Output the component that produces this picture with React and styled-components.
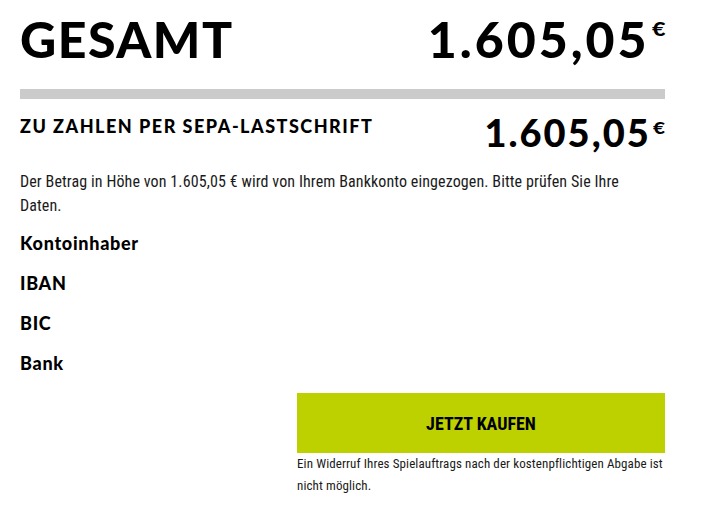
import React from "react";
import styled, { createGlobalStyle } from "styled-components";

const GlobalStyle = createGlobalStyle`
  html, body {
    margin: 0;
    padding: 0;
    background: #fff;
  }
  body {
    font-family: Lato, "Liberation Sans", sans-serif;
    color: #000;
  }
`;

const HEAD = `Lato, "Liberation Sans", sans-serif`;
const COND = `"Liberation Sans Narrow", "Roboto Condensed", "Liberation Sans", sans-serif`;

const Page = styled.div`
  width: 645px;
  padding: 14px 40px 0 20px;
`;

const Row = styled.div`
  display: flex;
  justify-content: space-between;
  align-items: flex-start;
  margin-top: ${(p) => p.$top || 0}px;
`;

const Title = styled.h1`
  margin: 0;
  font-family: ${HEAD};
  font-weight: 900;
  font-size: 50px;
  line-height: 50px;
  letter-spacing: 1.5px;
`;

const SubTitle = styled.h2`
  margin: 4px 0 0;
  font-family: ${HEAD};
  font-weight: 900;
  font-size: 18px;
  line-height: 18px;
  letter-spacing: 1.5px;
`;

const Amount = styled.div`
  display: flex;
  align-items: flex-start;
  font-family: ${HEAD};
  font-weight: 900;
  font-size: ${(p) => p.$size}px;
  line-height: ${(p) => p.$size}px;
  letter-spacing: ${(p) => p.$spacing || 0}px;
`;

const Euro = styled.span`
  display: inline-block;
  font-size: ${(p) => p.$size}px;
  line-height: ${(p) => p.$size}px;
  margin-top: ${(p) => p.$offset}px;
  margin-left: 2px;
  margin-right: 3px;
  letter-spacing: 0;
  transform: scaleX(1.3);
  transform-origin: left top;
`;

const Divider = styled.div`
  height: 10px;
  background: #cbcbcb;
  margin-top: 25px;
`;

const Info = styled.p`
  margin: 19px 0 0;
  max-width: 620px;
  font-family: ${COND};
  font-size: 16px;
  line-height: 24px;
  letter-spacing: 0.1px;
  color: #1a1a1a;
`;

const Fields = styled.div`
  margin-top: 5px;
  display: flex;
  flex-direction: column;
`;

const Field = styled.div`
  font-family: ${HEAD};
  font-weight: 900;
  font-size: 18px;
  line-height: 40px;
  letter-spacing: 0.7px;
`;

const Actions = styled.div`
  display: flex;
  justify-content: flex-end;
  margin-top: 10px;
`;

const ActionCol = styled.div`
  width: 368px;
`;

const BuyButton = styled.button`
  display: block;
  width: 100%;
  height: 60px;
  border: 0;
  padding: 0;
  background: #bdd000;
  color: #000;
  font-family: ${COND};
  font-weight: 700;
  font-size: 18px;
  cursor: pointer;
`;

const Note = styled.p`
  margin: 0;
  font-family: ${COND};
  font-size: 13px;
  line-height: 22px;
  letter-spacing: 0.1px;
  color: #1a1a1a;
`;

const Price = ({ value, size, euroSize, euroOffset, spacing }) => (
  <Amount $size={size} $spacing={spacing}>
    <span>{value}</span>
    <Euro $size={euroSize} $offset={euroOffset}>€</Euro>
  </Amount>
);

export default function App() {
  return (
    <>
      <GlobalStyle />
      <Page>
        <Row>
          <Title>GESAMT</Title>
          <Price value="1.605,05" size={50} euroSize={18} euroOffset={6} spacing={3} />
        </Row>
        <Divider />
        <Row $top={14}>
          <SubTitle>ZU ZAHLEN PER SEPA-LASTSCHRIFT</SubTitle>
          <Price value="1.605,05" size={38} euroSize={16} euroOffset={7} spacing={2} />
        </Row>
        <Info>
          Der Betrag in Höhe von 1.605,05 € wird von Ihrem Bankkonto eingezogen. Bitte prüfen Sie Ihre Daten.
        </Info>
        <Fields>
          <Field>Kontoinhaber</Field>
          <Field>IBAN</Field>
          <Field>BIC</Field>
          <Field>Bank</Field>
        </Fields>
        <Actions>
          <ActionCol>
            <BuyButton>JETZT KAUFEN</BuyButton>
            <Note>Ein Widerruf Ihres Spielauftrags nach der kostenpflichtigen Abgabe ist nicht möglich.</Note>
          </ActionCol>
        </Actions>
      </Page>
    </>
  );
}
